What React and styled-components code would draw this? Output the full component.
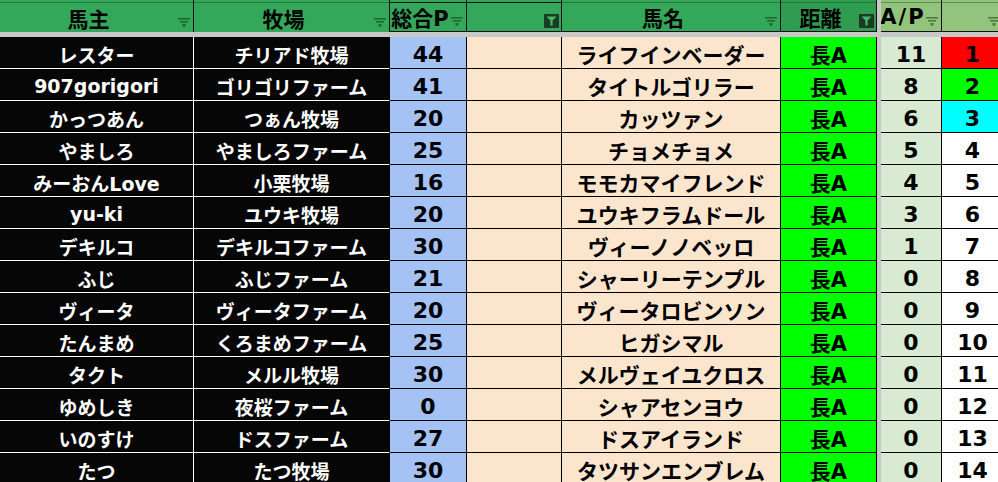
import styled, { createGlobalStyle } from "styled-components";

const GlobalStyle = createGlobalStyle`
  html, body {
    margin: 0;
    padding: 0;
    background: #fff;
    overflow: hidden;
  }
`;

const COLS = "194px 196px 77px 95px 219px 96px 4px 61px 62px";
const FONT = `"DejaVu Sans", "Noto Sans CJK JP", sans-serif`;

const Sheet = styled.div`
  width: 1004px;
  font-family: ${FONT};
  font-weight: 700;
  color: #000;
`;

const HeaderRow = styled.div`
  display: grid;
  grid-template-columns: ${COLS};
  height: 32px;
`;

const HeaderCell = styled.div`
  position: relative;
  display: flex;
  align-items: center;
  justify-content: center;
  box-sizing: border-box;
  padding: 3px 16px 0 0;
  font-size: 21px;
  white-space: nowrap;
  overflow: hidden;
  letter-spacing: ${(p) => (p.$spaced ? "2px" : "0")};
  background: linear-gradient(
    to bottom,
    ${(p) => p.$bg} 0 2px,
    ${(p) => p.$line} 2px 3px,
    ${(p) => p.$bg} 3px
  );
  border-right: 1px solid #111;
  border-bottom: ${(p) => (p.$boxed ? "1px solid #111" : "none")};
`;

const Separator = styled.div`
  height: 5px;
  background: #c8c8c8;
`;

const Row = styled.div`
  display: grid;
  grid-template-columns: ${COLS};
  height: 32px;
`;

const Cell = styled.div`
  display: flex;
  align-items: center;
  justify-content: center;
  box-sizing: border-box;
  padding-top: 3px;
  white-space: nowrap;
  overflow: hidden;
  font-size: ${(p) => p.$size || 20}px;
  background: ${(p) => p.$bg};
  color: ${(p) => (p.$dark ? "#fff" : "#000")};
  border-bottom: 1px solid ${(p) => (p.$dark ? "#fff" : "#000")};
  border-right: 1px solid
    ${(p) => (p.$dark ? (p.$edge ? "#000" : "#fff") : "#000")};
`;

const Gutter = styled.div`
  background: #c8c8c8;
`;

const IconSpot = styled.span`
  position: absolute;
  right: ${(p) => p.$right}px;
  bottom: ${(p) => p.$bottom}px;
  display: flex;
`;

const FilterButton = styled.span`
  display: flex;
  align-items: center;
  justify-content: center;
  width: 15px;
  height: 14px;
  background: #1c3b25;
  border-radius: 1px;
`;

function FilterIcon({ color }) {
  return (
    <IconSpot $right={3} $bottom={5}>
      <svg width="12" height="9" viewBox="0 0 12 9">
        <rect x="0" y="0" width="12" height="1.6" fill={color} />
        <rect x="2" y="3" width="8" height="1.6" fill={color} />
        <rect x="4.5" y="6" width="3" height="2.6" fill={color} />
      </svg>
    </IconSpot>
  );
}

function ActiveFilter() {
  return (
    <IconSpot $right={2} $bottom={3}>
      <FilterButton>
        <svg width="11" height="10" viewBox="0 0 11 10">
          <path d="M0.5 0.5 H10.5 L6.6 4.6 V9.5 H4.4 V4.6 Z" fill="#45b86a" />
        </svg>
      </FilterButton>
    </IconSpot>
  );
}

const GREEN = "#34a85a";
const DARK_GREEN = "#2f9c52";
const LIGHT_GREEN = "#93c47d";

const rows = [
  ["レスター", "チリアド牧場", 44, "ライフインベーダー", 11, 1, "#ff0000"],
  ["907gorigori", "ゴリゴリファーム", 41, "タイトルゴリラー", 8, 2, "#00ff00"],
  ["かっつあん", "つぁん牧場", 20, "カッツァン", 6, 3, "#00ffff"],
  ["やましろ", "やましろファーム", 25, "チョメチョメ", 5, 4],
  ["みーおんLove", "小栗牧場", 16, "モモカマイフレンド", 4, 5],
  ["yu-ki", "ユウキ牧場", 20, "ユウキフラムドール", 3, 6],
  ["デキルコ", "デキルコファーム", 30, "ヴィーノノベッロ", 1, 7],
  ["ふじ", "ふじファーム", 21, "シャーリーテンプル", 0, 8],
  ["ヴィータ", "ヴィータファーム", 20, "ヴィータロビンソン", 0, 9],
  ["たんまめ", "くろまめファーム", 25, "ヒガシマル", 0, 10],
  ["タクト", "メルル牧場", 30, "メルヴェイユクロス", 0, 11],
  ["ゆめしき", "夜桜ファーム", 0, "シャアセンヨウ", 0, 12],
  ["いのすけ", "ドスファーム", 27, "ドスアイランド", 0, 13],
  ["たつ", "たつ牧場", 30, "タツサンエンブレム", 0, 14],
];

export default function App() {
  return (
    <>
      <GlobalStyle />
      <Sheet>
        <HeaderRow>
          <HeaderCell $bg={GREEN} $line="#1f7a3c">
            馬主
            <FilterIcon color="#1d6a35" />
          </HeaderCell>
          <HeaderCell $bg={GREEN} $line="#1f7a3c">
            牧場
            <FilterIcon color="#1d6a35" />
          </HeaderCell>
          <HeaderCell $bg={GREEN} $line="#111" $boxed>
            総合P
            <FilterIcon color="#1d6a35" />
          </HeaderCell>
          <HeaderCell $bg={GREEN} $line="#111" $boxed>
            <ActiveFilter />
          </HeaderCell>
          <HeaderCell $bg={GREEN} $line="#1f7a3c" $boxed>
            馬名
            <FilterIcon color="#1d6a35" />
          </HeaderCell>
          <HeaderCell $bg={DARK_GREEN} $line="#1f7a3c" $boxed>
            距離
            <ActiveFilter />
          </HeaderCell>
          <Gutter />
          <HeaderCell $bg={LIGHT_GREEN} $line="#5f8f4c" $boxed $spaced>
            A/P
            <FilterIcon color="#4f7a40" />
          </HeaderCell>
          <HeaderCell $bg={LIGHT_GREEN} $line="#5f8f4c" $boxed>
            <FilterIcon color="#4f7a40" />
          </HeaderCell>
        </HeaderRow>
        <Separator />
        {rows.map((r, i) => (
          <Row key={i}>
            <Cell $bg="#060606" $dark $size={19}>{r[0]}</Cell>
            <Cell $bg="#060606" $dark $edge $size={19}>{r[1]}</Cell>
            <Cell $bg="#a4c2f4" $size={22}>{r[2]}</Cell>
            <Cell $bg="#fce5cd" />
            <Cell $bg="#fce5cd" $size={21}>{r[3]}</Cell>
            <Cell $bg="#00ff00" $size={21}>長A</Cell>
            <Gutter />
            <Cell $bg="#d9ead3" $size={22}>{r[4]}</Cell>
            <Cell $bg={r[6] || "#ffffff"} $size={22}>{r[5]}</Cell>
          </Row>
        ))}
      </Sheet>
    </>
  );
}
